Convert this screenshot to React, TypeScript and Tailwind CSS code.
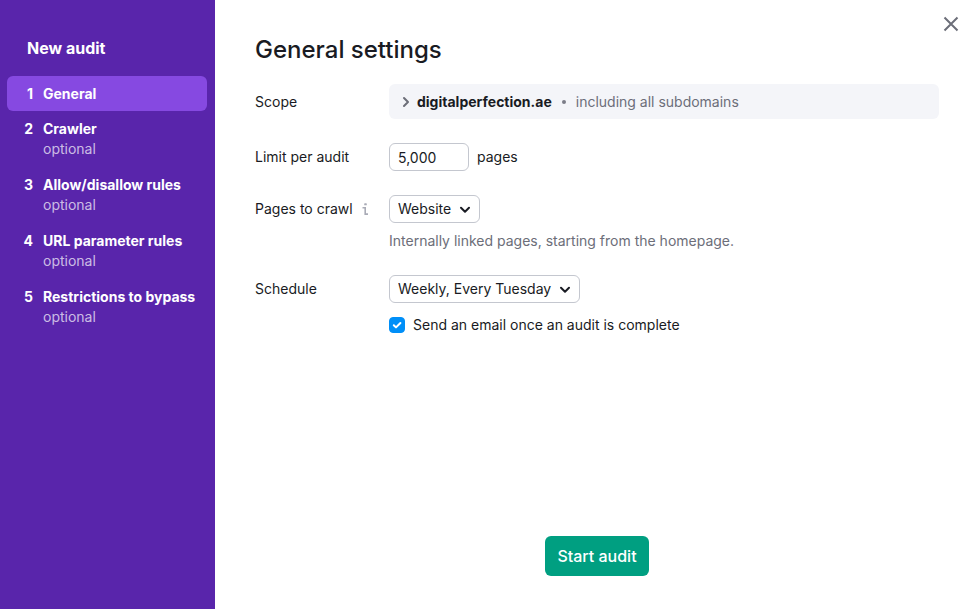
import React, { useState } from 'react'
import clsx from 'clsx'

interface Step {
  title: string
  optional?: boolean
}

const steps: Step[] = [
  { title: 'General' },
  { title: 'Crawler', optional: true },
  { title: 'Allow/disallow rules', optional: true },
  { title: 'URL parameter rules', optional: true },
  { title: 'Restrictions to bypass', optional: true },
]

interface SidebarProps {
  active: number
  onSelect: (index: number) => void
}

const Sidebar: React.FC<SidebarProps> = ({ active, onSelect }) => {
  return (
    <aside className="w-[215px] shrink-0 bg-[#5925ab] pt-9 pr-2 pl-[7px] text-white">
      <h2 className="pl-5 text-base leading-6 font-bold">New audit</h2>
      <nav className="mt-4">
        {steps.map((step, index) => (
          <button
            key={step.title}
            type="button"
            onClick={() => onSelect(index)}
            className={clsx(
              'flex w-full gap-2 rounded-md pt-2 text-left text-sm font-bold',
              step.optional ? 'pb-2' : 'pb-[7px]',
              index === active && 'bg-[#8649e1]'
            )}
          >
            <span className="w-7 shrink-0 pr-[2px] text-right">{index + 1}</span>
            <span className="whitespace-nowrap">
              {step.title}
              {step.optional && <span className="block font-normal text-white/70">optional</span>}
            </span>
          </button>
        ))}
      </nav>
    </aside>
  )
}

const ChevronDown = () => (
  <svg
    className="pointer-events-none absolute top-0 right-[9px] h-full w-3"
    viewBox="0 0 12 12"
    fill="none"
    stroke="currentColor"
    strokeWidth="2"
    strokeLinecap="round"
    strokeLinejoin="round"
    aria-hidden="true"
  >
    <path d="M2 4.7 6 8.7 10 4.7" />
  </svg>
)

interface SelectProps {
  id: string
  options: string[]
  className: string
}

const Select: React.FC<SelectProps> = ({ id, options, className }) => {
  return (
    <div className={clsx('relative', className)}>
      <select
        id={id}
        className="h-7 w-full appearance-none rounded-md border border-[#c4c7cf] bg-white pr-6 pl-2 text-sm"
      >
        {options.map((option) => (
          <option key={option}>{option}</option>
        ))}
      </select>
      <ChevronDown />
    </div>
  )
}

const App: React.FC = () => {
  const [active, setActive] = useState(0)
  const [limit, setLimit] = useState('5,000')
  const [notify, setNotify] = useState(true)

  return (
    <div className="flex min-h-screen bg-white font-['Inter',sans-serif] text-sm text-[#191b23]">
      <Sidebar active={active} onSelect={setActive} />

      <main className="relative flex min-w-0 flex-1 flex-col pt-[34px] pr-[37px] pb-[33px] pl-10">
        <button type="button" aria-label="Close" className="absolute top-4 right-[17px] text-[#6c6e79]">
          <svg className="size-4" viewBox="0 0 16 16" fill="none" stroke="currentColor" strokeWidth="2" aria-hidden="true">
            <path d="M1.5 1.5 14.5 14.5M14.5 1.5 1.5 14.5" />
          </svg>
        </button>

        <h1 className="text-2xl font-medium">General settings</h1>

        <form className="mt-[18px] flex flex-1 flex-col" onSubmit={(e) => e.preventDefault()}>
          <div className="flex items-center">
            <div className="w-[134px] shrink-0">Scope</div>
            <button
              type="button"
              className="flex h-[35px] flex-1 items-center rounded-md bg-[#f4f5f9] px-3 text-left"
            >
              <svg
                className="mr-1 h-3 w-3 text-[#6c6e79]"
                viewBox="0 0 12 12"
                fill="none"
                stroke="currentColor"
                strokeWidth="2"
                strokeLinecap="round"
                strokeLinejoin="round"
                aria-hidden="true"
              >
                <path d="M3 2 7 6 3 10" />
              </svg>
              <span className="font-bold">digitalperfection.ae</span>
              <span className="mx-[10px] size-1 rounded-full bg-[#7b7d88]" />
              <span className="text-[#6c6e79]">including all subdomains</span>
            </button>
          </div>

          <div className="mt-6 flex items-center">
            <label htmlFor="limit" className="w-[134px] shrink-0">
              Limit per audit
            </label>
            <input
              id="limit"
              type="text"
              value={limit}
              onChange={(e) => setLimit(e.target.value)}
              className="h-7 w-20 rounded-md border border-[#c4c7cf] px-2"
            />
            <span className="ml-2">pages</span>
          </div>

          <div className="mt-6 flex items-center">
            <div className="flex w-[134px] shrink-0 items-center gap-2">
              <label htmlFor="pages">Pages to crawl</label>
              <svg className="h-3 w-2 text-[#a9abb6]" viewBox="0 0 8 12" fill="currentColor" aria-hidden="true">
                <rect x="3.2" y="0.3" width="2.6" height="2" rx="0.6" />
                <path d="M1.5 4H5v6.3h2V12H3.4V5.5H1.5z" />
              </svg>
            </div>
            <Select id="pages" className="w-[91px]" options={['Website', 'Sitemap', 'File']} />
          </div>
          <p className="mt-2 ml-[134px] text-[#6c6e79]">Internally linked pages, starting from the homepage.</p>

          <div className="mt-6 flex items-center">
            <label htmlFor="schedule" className="w-[134px] shrink-0">
              Schedule
            </label>
            <Select
              id="schedule"
              className="w-[191px]"
              options={['Weekly, Every Tuesday', 'Daily', 'Once']}
            />
          </div>
          <label className="mt-3 ml-[134px] flex items-center gap-2">
            <span className="relative size-4">
              <input
                type="checkbox"
                checked={notify}
                onChange={(e) => setNotify(e.target.checked)}
                className="peer block size-4 appearance-none rounded border border-[#c4c7cf] checked:border-[#008ff8] checked:bg-[#008ff8]"
              />
              <svg
                className="pointer-events-none absolute inset-0 hidden size-4 text-white peer-checked:block"
                viewBox="0 0 16 16"
                fill="none"
                stroke="currentColor"
                strokeWidth="2"
                strokeLinecap="round"
                strokeLinejoin="round"
                aria-hidden="true"
              >
                <path d="M4.8 8.2 7 10.4 11.4 6" />
              </svg>
            </span>
            Send an email once an audit is complete
          </label>

          <button
            type="submit"
            className="mt-auto h-10 self-center rounded-md bg-[#009f81] px-3 text-base font-medium text-white"
          >
            Start audit
          </button>
        </form>
      </main>
    </div>
  )
}

export default App
